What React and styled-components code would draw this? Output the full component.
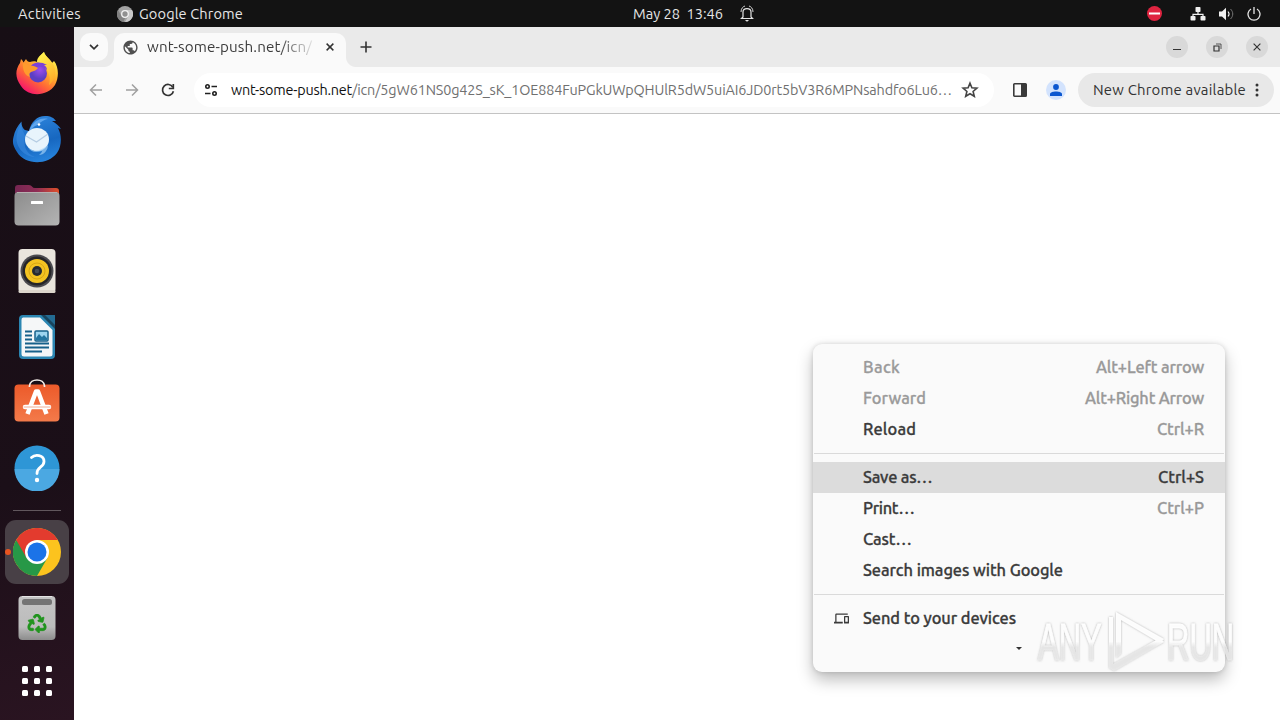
import React, { useLayoutEffect, useRef, useState } from 'react';
import styled, { createGlobalStyle, css } from 'styled-components';
import { MdDevices, MdPublic } from 'react-icons/md';
import { FaRecycle } from 'react-icons/fa';

const GlobalStyle = createGlobalStyle`
  * {
    box-sizing: border-box;
  }

  body {
    margin: 0;
    overflow: hidden;
    background: #fff;
    font-family: Ubuntu, 'Noto Sans', 'Open Sans', sans-serif;
  }

  svg {
    display: block;
    flex: none;
  }
`;

const Desktop = styled.div`
  position: relative;
  width: 1280px;
  height: 720px;
  display: flex;
  flex-direction: column;
  overflow: hidden;
`;

const TopBar = styled.header`
  height: 27px;
  flex: none;
  display: grid;
  grid-template-columns: 633px 1fr auto;
  align-items: center;
  background: #131313;
  color: #e6e6e6;
  font-size: 14.6px;
`;

const BarGroup = styled.div`
  display: flex;
  align-items: center;
  height: 27px;
  padding-left: ${props => props.$left || 0}px;
  padding-right: ${props => props.$right || 0}px;
  gap: ${props => props.$gap || 0}px;
`;

const Main = styled.div`
  flex: 1;
  display: flex;
  min-height: 0;
`;

const Dock = styled.nav`
  width: 74px;
  flex: none;
  padding-top: 13px;
  display: flex;
  flex-direction: column;
  align-items: center;
  background: linear-gradient(165deg, #170e15 0%, #1b0f18 65%, #2a1421 100%);

  hr {
    width: 48px;
    height: 1px;
    margin: 8px 0;
    border: 0;
    background: #61575d;
  }
`;

const DockItem = styled.div`
  position: relative;
  width: 64px;
  height: 64px;
  margin: 1px 0;
  padding-bottom: ${props => props.$lift || 0}px;
  flex: none;
  display: flex;
  align-items: center;
  justify-content: center;
  border-radius: 11px;

  ${props => props.$active && css`
    background: #484046;

    &::before {
      content: '';
      position: absolute;
      left: 0;
      top: 29px;
      width: 6px;
      height: 6px;
      border-radius: 50%;
      background: #e95420;
    }
  `}
`;

const Browser = styled.section`
  flex: 1;
  min-width: 0;
  display: flex;
  flex-direction: column;
`;

const TabStrip = styled.div`
  height: 40px;
  flex: none;
  display: flex;
  align-items: center;
  padding: 0 12px 0 6px;
  background: #eaeaea;
`;

const TabSearch = styled.div`
  width: 28px;
  height: 28px;
  display: flex;
  align-items: center;
  justify-content: center;
  border-radius: 10px;
  background: #fafafa;
`;

const Tab = styled.div`
  position: relative;
  align-self: flex-end;
  width: 232px;
  height: 34px;
  margin-left: 6px;
  padding: 0 12px 6px 8px;
  display: flex;
  align-items: center;
  border-radius: 10px 10px 0 0;
  background: #fafafa;
  color: #3c3c3c;
  font-size: 15.2px;

  &::before,
  &::after {
    content: '';
    position: absolute;
    bottom: 0;
    width: 10px;
    height: 10px;
  }

  &::before {
    left: -10px;
    background: radial-gradient(circle at 0 0, transparent 9.5px, #fafafa 10.5px);
  }

  &::after {
    right: -10px;
    background: radial-gradient(circle at 100% 0, transparent 9.5px, #fafafa 10.5px);
  }
`;

const TabTitle = styled.div`
  flex: 1;
  margin-left: 8px;
  mask-image: linear-gradient(90deg, #000 132px, transparent 170px);
`;

const NewTab = styled.div`
  margin-left: 14px;
  flex: 1;
`;

const WindowButton = styled.div`
  width: 22px;
  height: 22px;
  margin-left: 18px;
  display: flex;
  align-items: center;
  justify-content: center;
  border-radius: 50%;
  background: #d9d9d9;
`;

const Toolbar = styled.div`
  height: 47px;
  flex: none;
  display: flex;
  align-items: center;
  padding: 0 6px 0 12px;
  background: #fafafa;
  border-bottom: 1px solid #c3c3c3;
`;

const NavButtons = styled.div`
  width: 108px;
  display: flex;
  gap: 16px;
`;

const Omnibox = styled.div`
  width: 800px;
  height: 34px;
  padding: 0 15px 0 10px;
  display: flex;
  align-items: center;
  border-radius: 17px;
  background: #fff;
  color: #707070;
  font-size: 14.4px;

  b {
    color: #111;
    font-weight: 400;
  }
`;

const Url = styled.div`
  flex: 1;
  display: flex;
  margin-left: 13px;
`;

const Avatar = styled.div`
  width: 20px;
  height: 20px;
  margin: 0 12px 0 19px;
  display: flex;
  align-items: center;
  justify-content: center;
  border-radius: 50%;
  background: #d3e3fd;
`;

const UpdateChip = styled.div`
  width: 196px;
  height: 34px;
  padding: 0 9px 0 15px;
  display: flex;
  align-items: center;
  justify-content: space-between;
  border-radius: 17px;
  background: #e8e8e8;
  color: #333;
  font-size: 14.9px;
`;

const Menu = styled.div`
  position: absolute;
  left: 813px;
  top: 344px;
  width: 412px;
  height: 328px;
  padding: 8px 0;
  border-radius: 9px;
  background: #fafafa;
  box-shadow: 0 8px 16px rgba(0, 0, 0, 0.26), 0 0 5px rgba(0, 0, 0, 0.14);
  color: #3b3b3b;
  font-size: 16.4px;
  font-weight: 500;
  -webkit-text-stroke: 0.3px currentColor;

  hr {
    height: 1px;
    margin: 8px 1px;
    border: 0;
    background: #dadada;
  }
`;

const MenuRow = styled.div`
  height: 31px;
  padding: 0 21px 1px;
  display: flex;
  align-items: center;
  background: ${props => (props.$selected ? '#dcdcdc' : 'transparent')};
  color: ${props => (props.$disabled ? '#9a9a9a' : 'inherit')};
`;

const MenuIcon = styled.div`
  width: 29px;
`;

const Shortcut = styled.div`
  margin-left: auto;
  color: ${props => (props.$selected ? '#3b3b3b' : '#999')};
`;

const MoreArrow = styled.div`
  width: 6px;
  height: 3px;
  margin: 13px 0 0 203px;
  background: #333;
  clip-path: polygon(0 0, 100% 0, 50% 100%);
`;

const Watermark = styled.div`
  position: absolute;
  left: 1030px;
  top: 604px;

  svg {
    overflow: visible;
  }
`;

const FittedText = styled.span`
  display: inline-block;
  white-space: pre;
  line-height: 20px;
`;

// spreads the letters so that the label fills the given width
function Label({ children, width }) {
  const ref = useRef(null);
  const [spacing, setSpacing] = useState(0);

  useLayoutEffect(() => {
    const natural = ref.current.getBoundingClientRect().width;
    setSpacing((width - natural) / children.length);
  }, [children, width]);

  return (
    <FittedText ref={ref} style={{ letterSpacing: spacing }}>
      {children}
    </FittedText>
  );
}

const FirefoxIcon = () => (
  <svg width="48" height="48" viewBox="0 0 48 48">
    <defs>
      <linearGradient id="ffBody" x1="0.85" y1="0.1" x2="0.25" y2="0.95">
        <stop offset="0" stopColor="#fff44f" />
        <stop offset="0.35" stopColor="#ffb32c" />
        <stop offset="0.65" stopColor="#ff6a35" />
        <stop offset="1" stopColor="#f5156c" />
      </linearGradient>
      <radialGradient id="ffCore" cx="0.6" cy="0.3">
        <stop offset="0" stopColor="#9e4ded" />
        <stop offset="1" stopColor="#5b3fc4" />
      </radialGradient>
      <linearGradient id="ffTail" x1="0.3" y1="0" x2="0.7" y2="1">
        <stop offset="0" stopColor="#fff44f" />
        <stop offset="1" stopColor="#ffa927" />
      </linearGradient>
    </defs>
    <path d="M7 14 L8 10 C9 11 10 12 10.500 13.500 L13 10 C14 12 15 13 17 13 C20 12 23 12 26 14 C25 8 28 6 31 3 C32 7 36 9 39 14 L41 12 C46 18 46 29 42 36 C35 47 16 49 8 37 C2 29 2 21 7 14Z" fill="url(#ffBody)" />
    <path d="M24 13 C24 8 28 6 31 3 C32 8 40 11 42 20 C43 28 40 33 36 36 C39 26 34 18 24 13Z" fill="url(#ffTail)" />
    <circle cx="25" cy="24.500" r="9" fill="url(#ffCore)" />
    <path d="M18 17 C20 13 28 12 34 16 L31 16 C33 17 34 19 34 21 C29 16 23 17 20 20Z" fill="#7b42d8" />
    <path d="M10 14 C13 14 15 16 17 17 C20 16 23 18 25 19 C24 21 21 22 18 23 C16 24 16 26 17 28 C12 27 9 20 10 14Z" fill="#ff9b2d" />
  </svg>
);

const ThunderbirdIcon = () => (
  <svg width="50" height="50" viewBox="0 0 50 50">
    <defs>
      <linearGradient id="tbBody" x1="0.3" y1="0" x2="0.6" y2="1">
        <stop offset="0" stopColor="#2f86dd" />
        <stop offset="0.6" stopColor="#1767c0" />
        <stop offset="1" stopColor="#2784dd" />
      </linearGradient>
    </defs>
    <path d="M1.500 23 C2.500 17 5.500 12 9.500 7.500 C9 11 11 15 13 16 L17 17 C19 8 25 2 33 2 C39 2 42 4 44 7 L40 7 C44 9 47 12 49 15 L46 14 C50 21 50 32 45 39 C35 52 13 51 5 38 C1.500 33 0 29 1.500 23Z" fill="url(#tbBody)" />
    <path d="M5 20 C6 15 8 12 9.500 7.500 C8 16 13 18 13 23 C11 31 14 40 23 43 C13 43 2 33 5 20Z" fill="#3b8ae0" opacity="0.6" />
    <path d="M17 17 C20 8 28 3 36 5 C29 6 27 11 23 12 C20 14 19 16 17 17Z" fill="#5ea5ee" />
    <ellipse cx="25" cy="25.500" rx="12" ry="11.500" fill="#e8f4fc" />
    <path d="M14 22 L24.500 28 L36 20" fill="none" stroke="#b6cde3" strokeWidth="1.300" />
    <path d="M16 33 C21 39 29 37 36 31 C36 36 32 41 27 41 C29 39 30 38 30 37 C24 39 18 38 16 33Z" fill="#a8d4f7" opacity="0.65" />
    <circle cx="27" cy="10.500" r="1.300" fill="#fff" />
  </svg>
);

const FilesIcon = () => (
  <svg width="46" height="42" viewBox="0 0 46 42">
    <defs>
      <linearGradient id="flBack">
        <stop offset="0" stopColor="#762652" />
        <stop offset="0.5" stopColor="#8f2d55" />
        <stop offset="1" stopColor="#e0502a" />
      </linearGradient>
      <linearGradient id="flFront" x1="0" y1="0" x2="1" y2="1">
        <stop offset="0" stopColor="#8c8c8c" />
        <stop offset="1" stopColor="#b4b4b4" />
      </linearGradient>
    </defs>
    <path d="M1 4 Q1 1 4 1 H15 Q17 1 18 2.500 T21 4 H42 Q45 4 45 7 V20 H1Z" fill="url(#flBack)" />
    <rect x="0.500" y="8" width="45" height="33.500" rx="4" fill="url(#flFront)" />
    <path d="M3 8.500 H43" stroke="#b5b0b0" />
    <rect x="17" y="17" width="12" height="3" rx="0.600" fill="#fff" />
  </svg>
);

const SpeakerIcon = () => (
  <svg width="38" height="46" viewBox="0 0 38 46">
    <rect x="0.500" y="1" width="37" height="44" rx="4" fill="#e9e5dd" />
    <rect x="0.500" y="42" width="37" height="3" rx="1.500" fill="#dcd6cc" />
    <circle cx="19" cy="23" r="16.500" fill="#4b4b50" />
    <circle cx="19" cy="23" r="14.500" fill="#252528" />
    <circle cx="19" cy="23" r="12" fill="#f3c321" />
    <circle cx="19" cy="23" r="8" fill="none" stroke="#d8a714" />
    <circle cx="19" cy="23" r="5" fill="#252a31" />
    <circle cx="19" cy="23" r="2.300" fill="#444b55" />
  </svg>
);

const WriterIcon = () => (
  <svg width="38" height="46" viewBox="0 0 38 46">
    <path d="M5 1 H26 L37 12 V41 Q37 45 33 45 H5 Q1 45 1 41 V5 Q1 1 5 1Z" fill="#2b86b2" />
    <path d="M5 3.500 H22 L34.500 16 V40 Q34.500 42.500 32 42.500 H6 Q3.500 42.500 3.500 40 V6 Q3.500 3.500 5 3.500Z" fill="#f5f7f8" />
    <path d="M23 1 H37 V15Z" fill="#18445d" />
    <path d="M27 1 H37 V11Z" fill="#236b92" />
    <path d="M7 17.500 H14 M7 21.500 H14 M7 25.500 H14 M7 29.500 H31 M7 33.500 H31 M7 37.500 H24" stroke="#17618a" strokeWidth="2" />
    <rect x="17" y="17" width="13" height="10" rx="1" fill="#9dd4ef" stroke="#17618a" strokeWidth="1.500" />
    <path d="M18 26 V24 L21 20 L24 23 L26 21 L29 24 V26Z" fill="#2475a0" />
  </svg>
);

const SoftwareIcon = () => (
  <svg width="46" height="44" viewBox="0 0 46 44">
    <defs>
      <linearGradient id="swBag" x1="0" y1="0" x2="0" y2="1">
        <stop offset="0" stopColor="#ec5a2a" />
        <stop offset="1" stopColor="#f37a4a" />
      </linearGradient>
    </defs>
    <rect x="0.500" y="6.500" width="45" height="37" rx="4" fill="url(#swBag)" />
    <path d="M15.500 9 V8 C16 0 30 0 30.500 8 V9" fill="none" stroke="#f4eee9" strokeWidth="1.700" />
    <path d="M13.500 36 L22 13.500 H24 L32.500 36" fill="none" stroke="#fff" strokeWidth="4.500" strokeLinejoin="round" />
    <path d="M11 29 H35" stroke="#fff" strokeWidth="4.500" strokeLinecap="round" />
    <path d="M9.500 29 H36.500" stroke="#ec9a7c" strokeWidth="0.800" />
  </svg>
);

const HelpIcon = () => (
  <svg width="46" height="46" viewBox="0 0 46 46">
    <circle cx="23" cy="23" r="22.500" fill="#2e96d6" />
    <path d="M0.500 24 A22.500 22.500 0 0 0 45.500 24Z" fill="#4ba8e2" />
    <path d="M17.500 12.500 C21 9 30 9.500 30 16.500 C30 22.500 23 21.500 23 28.500" fill="none" stroke="#fff" strokeWidth="2.800" strokeLinecap="round" />
    <circle cx="23" cy="35" r="2.200" fill="#fff" />
  </svg>
);

const ChromeIcon = () => (
  <svg width="48" height="48" viewBox="0 0 48 48">
    <circle cx="24" cy="24" r="24" fill="#fcc31e" />
    <path d="M24 24 L3.200 12 A24 24 0 0 0 24 48 L34.400 30Z" fill="#279847" />
    <path d="M3.200 12 A24 24 0 0 1 44.800 12 H24 L13.600 30Z" fill="#e33b2e" />
    <circle cx="24" cy="24" r="12" fill="#fff" />
    <circle cx="24" cy="24" r="9.500" fill="#1b73e8" />
  </svg>
);

const TrashIcon = () => (
  <svg width="38" height="46" viewBox="0 0 38 46">
    <defs>
      <linearGradient id="trBin" x1="0" y1="0" x2="0" y2="1">
        <stop offset="0" stopColor="#c4c4c4" />
        <stop offset="0.7" stopColor="#bcbcbc" />
        <stop offset="1" stopColor="#8c8c8c" />
      </linearGradient>
    </defs>
    <rect x="0.500" y="1" width="37" height="44" rx="4" fill="url(#trBin)" />
    <path d="M4 1.500 H34" stroke="#e4e4e4" />
    <rect x="4" y="4" width="30" height="6" rx="2.500" fill="#747474" />
    <FaRecycle x="9.500" y="19" size={19} color="#21941e" stroke="#21941e" strokeWidth="20" />
  </svg>
);

const AppsIcon = () => (
  <svg width="32" height="32" viewBox="0 0 32 32" fill="#fff">
    {[1, 13, 25].map(y => [1, 13, 25].map(x => (
      <rect key={x + '-' + y} x={x} y={y} width="6" height="6" rx="1.500" />
    )))}
  </svg>
);

const MonoChromeIcon = () => (
  <svg width="16" height="16" viewBox="0 0 16 16">
    <circle cx="8" cy="8" r="8" fill="#a2a2a2" />
    <path d="M8 4 H15 A8 8 0 0 1 8 16 L11.500 10Z" fill="#c9c9c9" />
    <path d="M1 4 L4.500 10 L8 12 L6.500 16 A8 8 0 0 1 1 4Z" fill="#818181" />
    <circle cx="8" cy="8" r="3.300" fill="#909090" stroke="#f2f2f2" strokeWidth="1.300" />
  </svg>
);

const BellIcon = () => (
  <svg width="14" height="17" viewBox="0 0 14 17" fill="none" stroke="#e6e6e6" strokeWidth="1.200">
    <path d="M3 12 V7 C3 2.500 11 2.500 11 7 V12 L12.500 13.500 H1.500Z" />
    <path d="M1 7 C1 3.500 3 1.500 5 1 M13 7 C13 3.500 11 1.500 9 1" strokeWidth="0.900" />
    <path d="M5 15 H9 L7.500 16.500 H6.500Z" fill="#e6e6e6" stroke="none" />
  </svg>
);

const BlockIcon = () => (
  <svg width="15" height="15" viewBox="0 0 15 15">
    <circle cx="7.500" cy="7.500" r="7.500" fill="#df2440" />
    <rect x="2" y="6.500" width="11" height="2" fill="#fff" />
  </svg>
);

const NetworkIcon = () => (
  <svg width="16" height="14" viewBox="0 0 16 14" fill="#f0f0f0">
    <rect x="5.500" width="5" height="5" rx="0.800" />
    <rect x="0.500" y="9" width="5" height="4.500" rx="0.800" />
    <rect x="10.500" y="9" width="5" height="4.500" rx="0.800" />
    <path d="M8 4 V7 M3 10 V7.300 H13 V10" fill="none" stroke="#f0f0f0" strokeWidth="1.200" />
  </svg>
);

const VolumeIcon = () => (
  <svg width="15" height="14" viewBox="0 0 15 14" fill="none" stroke="#f0f0f0">
    <path d="M0 4.500 H3 L7 0.800 V13.200 L3 9.500 H0Z" fill="#f0f0f0" stroke="none" />
    <path d="M9 4.500 C10.300 6 10.300 8 9 9.500" strokeWidth="1.100" />
    <path d="M11.500 2 C14.500 5 14.500 9 11.500 12" stroke="#777" />
  </svg>
);

const PowerIcon = () => (
  <svg width="14" height="14" viewBox="0 0 14 14" fill="none" stroke="#e6e6e6" strokeWidth="1.300">
    <path d="M4 2 A6 6 0 1 0 10 2 M7 0 V7" />
  </svg>
);

const ArrowIcon = ({ flip }) => (
  <svg width="20" height="20" viewBox="0 0 20 20" fill="none" stroke="#a0a0a0" strokeWidth="1.500">
    <path d={flip ? 'M4 10 H15.500 M10 4.500 L15.500 10 L10 15.500' : 'M16 10 H4.500 M10 4.500 L4.500 10 L10 15.500'} />
  </svg>
);

const ReloadIcon = () => (
  <svg width="20" height="20" viewBox="0 0 20 20" fill="none" stroke="#333" strokeWidth="1.700">
    <path d="M14.800 7.200 A5.500 5.500 0 1 0 15.400 11.200" />
    <path d="M15.300 4 V8.500 H10.800" />
  </svg>
);

const SiteSettingsIcon = () => (
  <svg width="14" height="14" viewBox="0 0 14 14" fill="none" stroke="#202020" strokeWidth="1.600">
    <circle cx="3.500" cy="3.500" r="1.700" />
    <path d="M7.500 3.500 H13 M1 10.500 H6.500" />
    <circle cx="10.500" cy="10.500" r="1.700" />
  </svg>
);

const StarIcon = () => (
  <svg width="18" height="18" viewBox="0 0 18 18" fill="none" stroke="#444" strokeWidth="1.600">
    <path d="M9 2.200 L10.900 6.800 L15.900 7.200 L12.100 10.500 L13.300 15.300 L9 12.700 L4.700 15.300 L5.900 10.500 L2.100 7.200 L7.100 6.800Z" />
  </svg>
);

const SidePanelIcon = () => (
  <svg width="14" height="14" viewBox="0 0 14 14">
    <rect x="0.800" y="0.800" width="12.400" height="12.400" rx="0.700" fill="none" stroke="#3a3a3a" strokeWidth="1.600" />
    <rect x="8" y="1" width="5" height="12" fill="#3a3a3a" />
  </svg>
);

const CrossIcon = ({ size = 8, weight = 1.6 }) => (
  <svg width={size} height={size} viewBox="0 0 9 9" stroke="#333" strokeWidth={weight}>
    <path d="M0.700 0.700 L8.300 8.300 M8.300 0.700 L0.700 8.300" />
  </svg>
);

const AnyRunLogo = () => (
  <svg width="220" height="80" viewBox="0 0 220 80">
    <defs>
      <linearGradient id="wmFill" x1="0" y1="0" x2="0" y2="1">
        <stop offset="0.500" stopColor="#fff" stopOpacity="0.95" />
        <stop offset="0.600" stopColor="#ececec" stopOpacity="0.75" />
      </linearGradient>
      <filter id="wmGlow" x="-10%" y="-10%" width="120%" height="120%">
        <feDropShadow dx="0" dy="0" stdDeviation="1.300" floodColor="#777" floodOpacity="0.6" />
      </filter>
    </defs>
    <g filter="url(#wmGlow)" fill="url(#wmFill)" fontFamily="'Liberation Sans', sans-serif" fontSize="31">
      <text transform="translate(8 56) scale(1 1.7)" stroke="url(#wmFill)" strokeWidth="0.500">ANY</text>
      <text transform="translate(137 56) scale(1 1.7)" stroke="url(#wmFill)" strokeWidth="0.500">RUN</text>
      <path d="M86 8 L134 35 L130 39 L91 16 V50 L86 54Z M79 13 H83 V60 L130 34 L134 38 L84 67 L79 64Z" />
    </g>
  </svg>
);

const menuItems = [
  [
    { label: 'Back', width: 37, keys: 'Alt+Left arrow', keysWidth: 108, disabled: true },
    { label: 'Forward', width: 63, keys: 'Alt+Right Arrow', keysWidth: 119, disabled: true },
    { label: 'Reload', width: 53, keys: 'Ctrl+R', keysWidth: 47 },
  ],
  [
    { label: 'Save as…', width: 69.5, keys: 'Ctrl+S', keysWidth: 46, selected: true },
    { label: 'Print…', width: 51.5, keys: 'Ctrl+P', keysWidth: 47 },
    { label: 'Cast…', width: 48.5 },
    { label: 'Search images with Google', width: 200 },
  ],
  [
    { label: 'Send to your devices', width: 153, icon: <MdDevices size={15} /> },
  ],
];

function ContextMenu() {
  return (
    <Menu>
      {menuItems.map((group, index) => (
        <React.Fragment key={index}>
          {index > 0 && <hr />}
          {group.map(item => (
            <MenuRow key={item.label} $selected={item.selected} $disabled={item.disabled}>
              <MenuIcon>{item.icon}</MenuIcon>
              <Label width={item.width}>{item.label}</Label>
              {item.keys && (
                <Shortcut $selected={item.selected}>
                  <Label width={item.keysWidth}>{item.keys}</Label>
                </Shortcut>
              )}
            </MenuRow>
          ))}
        </React.Fragment>
      ))}
      <MoreArrow />
    </Menu>
  );
}

function App() {
  return (
    <Desktop>
      <GlobalStyle />
      <TopBar>
        <BarGroup $left={18}>
          <Label width={63}>Activities</Label>
          <BarGroup $left={36} $gap={6}>
            <MonoChromeIcon />
            <Label width={104}>Google Chrome</Label>
          </BarGroup>
        </BarGroup>
        <BarGroup $gap={17}>
          <Label width={90}>May 28  13:46</Label>
          <BellIcon />
        </BarGroup>
        <BarGroup $right={19}>
          <BlockIcon />
          <BarGroup $left={28} $gap={13}>
            <NetworkIcon />
            <VolumeIcon />
            <PowerIcon />
          </BarGroup>
        </BarGroup>
      </TopBar>

      <Main>
        <Dock>
          <DockItem><FirefoxIcon /></DockItem>
          <DockItem><ThunderbirdIcon /></DockItem>
          <DockItem><FilesIcon /></DockItem>
          <DockItem><SpeakerIcon /></DockItem>
          <DockItem><WriterIcon /></DockItem>
          <DockItem $lift={6}><SoftwareIcon /></DockItem>
          <DockItem $lift={2}><HelpIcon /></DockItem>
          <hr />
          <DockItem $active><ChromeIcon /></DockItem>
          <DockItem><TrashIcon /></DockItem>
          <DockItem $lift={6}><AppsIcon /></DockItem>
        </Dock>

        <Browser>
          <TabStrip>
            <TabSearch>
              <svg width="10" height="6" viewBox="0 0 10 6" fill="none" stroke="#333" strokeWidth="1.700">
                <path d="M1 0.800 L5 4.800 L9 0.800" />
              </svg>
            </TabSearch>
            <Tab>
              <MdPublic size={17} color="#505050" />
              <TabTitle><Label width={165}>wnt-some-push.net/icn/</Label></TabTitle>
              <CrossIcon />
            </Tab>
            <NewTab>
              <svg width="12" height="12" viewBox="0 0 12 12" stroke="#333" strokeWidth="1.600">
                <path d="M6 0.500 V11.500 M0.500 6 H11.500" />
              </svg>
            </NewTab>
            <WindowButton>
              <svg width="10" height="10"><rect x="1" y="7" width="8" height="1" fill="#333" /></svg>
            </WindowButton>
            <WindowButton>
              <svg width="9" height="9" viewBox="0 0 9 9" fill="none" stroke="#333">
                <path d="M1 3 H6 V8 H1Z" strokeWidth="1.200" />
                <path d="M3 1 H8 V6" strokeWidth="0.800" />
              </svg>
            </WindowButton>
            <WindowButton><CrossIcon weight={1.3} /></WindowButton>
          </TabStrip>

          <Toolbar>
            <NavButtons>
              <ArrowIcon />
              <ArrowIcon flip />
              <ReloadIcon />
            </NavButtons>
            <Omnibox>
              <SiteSettingsIcon />
              <Url>
                <b><Label width={121}>wnt-some-push.net</Label></b>
                <Label width={600}>/icn/5gW61NS0g42S_sK_1OE884FuPGkUWpQHUlR5dW5uiAI6JD0rt5bV3R6MPNsahdfo6Lu6…</Label>
              </Url>
              <StarIcon />
            </Omnibox>
            <BarGroup $left={19}>
              <SidePanelIcon />
              <Avatar>
                <svg width="12" height="12" viewBox="0 0 12 12" fill="#0b57d0">
                  <circle cx="6" cy="3" r="2.900" />
                  <path d="M0 12 V10 C0 6.500 12 6.500 12 10 V12Z" />
                </svg>
              </Avatar>
            </BarGroup>
            <UpdateChip>
              <Label width={153}>New Chrome available</Label>
              <svg width="16" height="16" viewBox="0 0 16 16" fill="#333">
                <circle cx="8" cy="3" r="1.500" />
                <circle cx="8" cy="8" r="1.500" />
                <circle cx="8" cy="13" r="1.500" />
              </svg>
            </UpdateChip>
          </Toolbar>
        </Browser>
      </Main>

      <ContextMenu />
      <Watermark><AnyRunLogo /></Watermark>
    </Desktop>
  );
}

export default App;
